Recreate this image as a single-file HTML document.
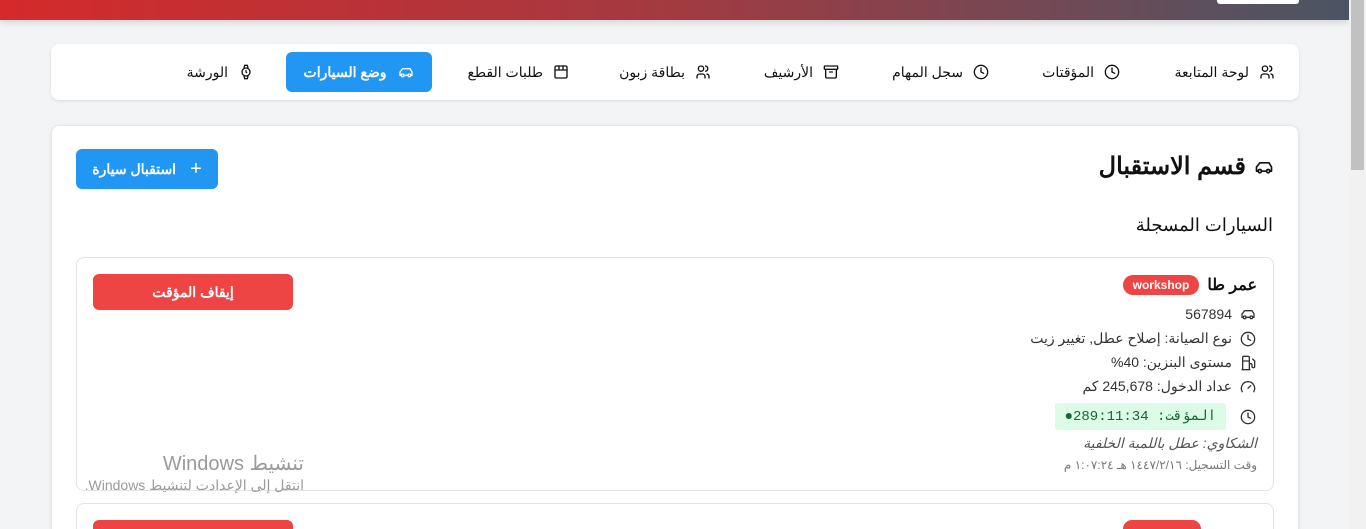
<!DOCTYPE html>
<html style="height:529px;overflow:hidden"><head><meta charset="utf-8"><style>
*{box-sizing:border-box;margin:0;padding:0}
body{width:1366px;height:529px;overflow:hidden;background:#f3f4f6;font-family:"Liberation Sans","Noto Sans CJK SC",sans-serif;color:#111;position:relative}
.a{position:absolute}
.top{left:0;top:0;width:1349px;height:20px;background:linear-gradient(90deg,#d42a2b,#a33a42 50%,#4a5564);box-shadow:0 2px 8px rgba(0,0,0,.15)}
.sb{left:1349px;top:0;width:17px;height:529px;background:#f1f1f1}
.card{background:#fff;border-radius:8px;box-shadow:0 1px 3px rgba(0,0,0,.1)}
.ni{top:62px;height:20px;font-size:14px;display:flex;align-items:center;gap:10px;direction:rtl}
svg{fill:none;stroke:currentColor;stroke-width:2;stroke-linecap:round;stroke-linejoin:round}
.row{right:110px;font-size:14px;color:#333;display:flex;align-items:center;gap:8px;direction:rtl}
.badge{background:#ef4444;color:#fff;font-size:12px;font-weight:bold;border-radius:10px;padding:3px 10px}
</style></head><body>
<div class="a top"></div>
<div class="a" style="left:1217px;top:0;width:82px;height:4px;background:#fff;border-radius:0 0 3px 3px"></div>
<div class="a sb"><div style="position:absolute;left:2px;top:0;width:13px;height:170px;background:#c1c1c1"></div></div>

<div class="a card" style="left:51px;top:44px;width:1248px;height:56px"></div>
<div class="a ni" style="right:91px"><svg width="16" height="16" viewBox="0 0 24 24"><circle cx="9" cy="7" r="4"/><path d="M3 21v-2a4 4 0 0 1 4-4h4a4 4 0 0 1 4 4v2M16 3.1a4 4 0 0 1 0 7.8M21 21v-2a4 4 0 0 0-3-3.9"/></svg>لوحة المتابعة</div>
<div class="a ni" style="right:246px"><svg width="16" height="16" viewBox="0 0 24 24"><circle cx="12" cy="12" r="10"/><path d="M12 6v6l4 2"/></svg>المؤقتات</div>
<div class="a ni" style="right:377px"><svg width="16" height="16" viewBox="0 0 24 24"><circle cx="12" cy="12" r="10"/><path d="M12 6v6l4 2"/></svg>سجل المهام</div>
<div class="a ni" style="right:527px"><svg width="16" height="16" viewBox="0 0 24 24"><rect x="2" y="3" width="20" height="5" rx="1"/><path d="M4 8v11a2 2 0 0 0 2 2h12a2 2 0 0 0 2-2V8M10 12h4"/></svg>الأرشيف</div>
<div class="a ni" style="right:655px"><svg width="16" height="16" viewBox="0 0 24 24"><circle cx="9" cy="7" r="4"/><path d="M3 21v-2a4 4 0 0 1 4-4h4a4 4 0 0 1 4 4v2M16 3.1a4 4 0 0 1 0 7.8M21 21v-2a4 4 0 0 0-3-3.9"/></svg>بطاقة زبون</div>
<div class="a ni" style="right:797px"><svg width="16" height="16" viewBox="0 0 24 24"><rect x="3" y="3" width="18" height="18" rx="2"/><path d="M3 9h18M9 3v6M15 3v6"/></svg>طلبات القطع</div>
<div class="a" style="left:286px;top:52px;width:146px;height:40px;background:#2196f3;border-radius:6px;color:#fff;font-size:14px;font-weight:bold;display:flex;align-items:center;justify-content:center;gap:12px;direction:rtl"><svg width="16" height="16" viewBox="0 0 24 24"><path d="M19 17h2v-5l-3-5H7l-4 5v5h2"/><circle cx="7" cy="17" r="2"/><circle cx="17" cy="17" r="2"/><path d="M9 17h6"/></svg>وضع السيارات</div>
<div class="a ni" style="right:1112px"><svg width="16" height="16" viewBox="0 0 24 24"><circle cx="12" cy="12" r="6"/><path d="M12 10v2l1 1M9 18l1 4h4l1-4M9 6l1-4h4l1 4"/></svg>الورشة</div>

<div class="a card" style="left:51px;top:125px;width:1248px;height:404px;border:1px solid #e5e7eb;border-bottom:none;border-radius:8px 8px 0 0"></div>
<div class="a" style="right:92px;top:152px;font-size:24px;font-weight:bold;display:flex;align-items:center;gap:8px;direction:rtl"><svg width="20" height="20" viewBox="0 0 24 24"><path d="M19 17h2v-5l-3-5H7l-4 5v5h2"/><circle cx="7" cy="17" r="2"/><circle cx="17" cy="17" r="2"/><path d="M9 17h6"/></svg>قسم الاستقبال</div>
<div class="a" style="left:76px;top:149px;width:142px;height:40px;background:#2196f3;border-radius:6px;color:#fff;font-size:14px;font-weight:bold;display:flex;align-items:center;justify-content:center;gap:14px;direction:rtl"><span style="font-size:20px;font-weight:normal">+</span>استقبال سيارة</div>
<div class="a" style="right:93px;top:215px;font-size:18px;direction:rtl">السيارات المسجلة</div>

<div class="a" style="left:76px;top:257px;width:1198px;height:234px;background:#fff;border:1px solid #e2e4e8;border-radius:8px"></div>
<div class="a" style="left:93px;top:274px;width:200px;height:36px;background:#ef4444;border-radius:6px;color:#fff;font-size:14px;font-weight:bold;display:flex;align-items:center;justify-content:center">إيقاف المؤقت</div>
<div class="a" style="right:109px;top:275px;display:flex;align-items:center;gap:8px;direction:rtl"><span style="font-size:16px;font-weight:bold">عمر طا</span><span class="badge">workshop</span></div>
<div class="a row" style="top:306px"><svg width="16" height="16" viewBox="0 0 24 24"><path d="M19 17h2v-5l-3-5H7l-4 5v5h2"/><circle cx="7" cy="17" r="2"/><circle cx="17" cy="17" r="2"/><path d="M9 17h6"/></svg>567894</div>
<div class="a row" style="top:330px"><svg width="16" height="16" viewBox="0 0 24 24"><circle cx="12" cy="12" r="10"/><path d="M12 6v6l4 2"/></svg>نوع الصيانة: إصلاح عطل, تغيير زيت</div>
<div class="a row" style="top:354px"><svg width="16" height="16" viewBox="0 0 24 24"><path d="M3 22h12M4 9h10M14 22V4a2 2 0 0 0-2-2H6a2 2 0 0 0-2 2v18M14 13h2a2 2 0 0 1 2 2v2a2 2 0 0 0 4 0V9l-3-3"/></svg>مستوى البنزين: 40%</div>
<div class="a row" style="top:378px"><svg width="16" height="16" viewBox="0 0 24 24"><path d="M12 14l4-4M3.3 19a10 10 0 1 1 17.4 0"/></svg>عداد الدخول: 245,678 كم</div>
<div class="a row" style="top:403px"><svg width="16" height="16" viewBox="0 0 24 24"><circle cx="12" cy="12" r="10"/><path d="M12 6v6l4 2"/></svg><span style="background:#dcfce7;color:#166534;font-family:'Liberation Mono',monospace;font-size:14px;padding:5px 10px;border-radius:3px;margin-right:6px">المؤقت: 289:11:34●</span></div>
<div class="a" style="right:109px;top:435px;font-size:14px;color:#555;font-style:italic;direction:rtl">الشكاوي: عطل باللمبة الخلفية</div>
<div class="a" style="right:109px;top:458px;font-size:12px;color:#777;direction:rtl">وقت التسجيل: ١٤٤٧/٢/١٦ هـ ١:٠٧:٢٤ م</div>

<div class="a" style="left:76px;top:503px;width:1198px;height:26px;background:#fff;border:1px solid #e2e4e8;border-bottom:none;border-radius:8px 8px 0 0"></div>
<div class="a" style="left:93px;top:520px;width:200px;height:9px;background:#ef4444;border-radius:6px 6px 0 0"></div>
<div class="a" style="left:1123px;top:520px;width:78px;height:9px;background:#ef4444;border-radius:10px 10px 0 0"></div>

<div class="a" style="right:1062px;top:451px;font-size:20px;color:#9a9a9a;direction:rtl">تنشيط Windows</div>
<div class="a" style="right:1062px;top:477px;font-size:14px;color:#9a9a9a;direction:rtl">انتقل إلى الإعدادت لتنشيط Windows.</div>
</body></html>
